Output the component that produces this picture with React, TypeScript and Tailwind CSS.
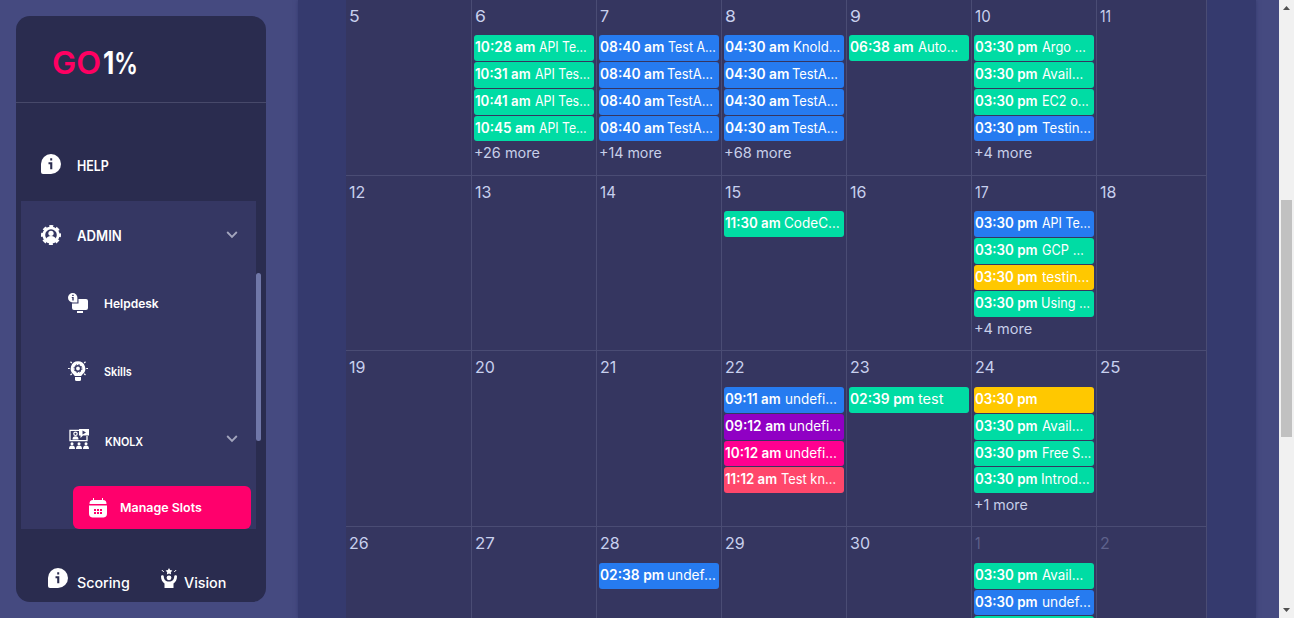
import { useLayoutEffect, useRef, type ReactNode } from "react";
import clsx from "clsx";

/** Condenses or widens a label so that it fills `width` pixels. */
function Fit({ text, width, className }: { text: string; width: number; className?: string }) {
  const ref = useRef<HTMLSpanElement>(null);
  useLayoutEffect(() => {
    const el = ref.current;
    if (!el || !text) return;
    const apply = () => {
      if (el.offsetWidth > 0) el.style.transform = `scaleX(${width / el.offsetWidth})`;
    };
    apply();
    document.fonts.ready.then(apply);
  }, [text, width]);
  return (
    <span className={clsx("block shrink-0 whitespace-pre", className)} style={{ width }}>
      <span ref={ref} className="inline-block origin-left">
        {text}
      </span>
    </span>
  );
}

function InfoIcon() {
  return (
    <svg width="20" height="20" viewBox="0 0 20 20" className="shrink-0">
      <path d="M10 0a10 10 0 1 1 0 20H2a2 2 0 0 1-2-2v-8A10 10 0 0 1 10 0Z" fill="#fff" />
      <path d="M9.2 4.3h2v2.2h-2zM7.5 8.3h3.8v7H9.2v-5H7.5z" fill="#2a2c4f" />
    </svg>
  );
}

function AdminIcon() {
  return (
    <svg width="20" height="20" viewBox="0 0 20 20" className="shrink-0">
      <circle cx="10" cy="10" r="7.2" fill="none" stroke="#fff" strokeWidth="2.8" />
      <circle cx="10" cy="10" r="9" fill="none" stroke="#fff" strokeWidth="2" strokeDasharray="4 3.07" strokeDashoffset="2" />
      <circle cx="10" cy="8.3" r="2.6" fill="#fff" />
      <path d="M4.8 15c.6-3 2.5-4 5.2-4s4.600 1 5.200 4L10 18z" fill="#fff" />
    </svg>
  );
}

function HelpdeskIcon() {
  return (
    <svg width="20" height="20" viewBox="0 0 20 20" className="shrink-0">
      <path d="M10.500 6H18a2 2 0 0 1 2 2v7a2 2 0 0 1-2 2H6a2 2 0 0 1-2-2v-4.500h6.500z" fill="#fff" />
      <path d="M9 18h6v2H9z" fill="#fff" />
      <path d="M4.700 0a4.700 4.700 0 0 1 4.700 4.700v4.700H4.700A4.700 4.700 0 0 1 4.700 0Z" fill="#fff" />
      <path d="M4.200 1.700h1.500v1.300H4.200zM3.800 3.900h1.900v3.600H4.300V4.900h-.5z" fill="#353763" />
    </svg>
  );
}

function SkillsIcon() {
  return (
    <svg width="20" height="20" viewBox="0 0 20 20" className="shrink-0">
      <path d="M10 .3a7.300 7.300 0 0 1 4.400 13.100l-1.200 1.600H6.800l-1.200-1.600A7.300 7.300 0 0 1 10 .3Z" fill="#fff" />
      <path d="M7 16h6v2.500a1.500 1.500 0 0 1-1.500 1.500h-3A1.500 1.500 0 0 1 7 18.500z" fill="#fff" />
      <path d="M0 7.500h1.800M18.200 7.500H20M2.500.8l1.300 1.200M17.500.8 16.200 2M2.500 14l1.300-1.200M17.500 14l-1.300-1.200" stroke="#fff" strokeWidth="1.200" />
      <circle cx="10" cy="7.500" r="2.700" fill="none" stroke="#353763" strokeWidth="1.600" />
      <circle cx="10" cy="7.500" r="3.900" fill="none" stroke="#353763" strokeWidth="1" strokeDasharray="1.500 1.560" />
    </svg>
  );
}

function KnolxIcon() {
  return (
    <svg width="20" height="20" viewBox="0 0 20 20" className="shrink-0">
      <path d="M10 1.300H1v10.400h17V7" fill="none" stroke="#fff" strokeWidth="1.300" />
      <path d="M10 0h10v6.500h-6L11.500 9V6.500H10z" fill="#fff" />
      <path d="m13.500 1.500 3.500 2-3.500 2z" fill="#353763" />
      <circle cx="6.500" cy="4.800" r="1.700" fill="none" stroke="#fff" strokeWidth="1.200" />
      <path d="M3.500 10.500c0-2.500 1-3.200 3-3.200s3 .7 3 3.200z" fill="#fff" />
      <g fill="#fff">
        <circle cx="3" cy="14.800" r="1.500" />
        <circle cx="10" cy="14.800" r="1.500" />
        <circle cx="17" cy="14.800" r="1.500" />
        <path d="M0 20c0-2.500 1-3.500 3-3.500S6 17.500 6 20zM7 20c0-2.500 1-3.500 3-3.500s3 1 3 3.500zM14 20c0-2.500 1-3.500 3-3.500s3 1 3 3.500z" />
      </g>
    </svg>
  );
}

function CalendarIcon() {
  return (
    <svg width="18" height="20" viewBox="0 0 18 20" className="shrink-0">
      <path d="M4 0h1v2h8V0h1v2c2.500 0 3.500 1.500 3.500 4H.5C.5 3.500 1.500 2 4 2z" fill="#fff" />
      <path d="M0 7.500h18V15c0 3.500-1.500 4.500-4.500 4.500h-9C1.500 19.500 0 18.500 0 15z" fill="#fff" />
      <path d="M5 11h2v2H5zM8 11h2v2H8zM11 11h2v2h-2zM5 14h2v2H5zM8 14h2v2H8zM11 14h2v2h-2z" fill="#ff006c" />
    </svg>
  );
}

function VisionIcon() {
  return (
    <svg width="16" height="20" viewBox="0 0 16 20" className="shrink-0">
      <path d="m8 0 1.100 2.100 2.300.4-1.600 1.700.3 2.300L8 5.500l-2.100 1 .3-2.300-1.600-1.700 2.300-.4z" fill="#fff" />
      <path d="m.8 2 2 2M15.200 2l-2 2" stroke="#fff" strokeWidth="1" />
      <circle cx="8" cy="9.800" r="2.400" fill="#fff" />
      <path d="M0 8.500c0-1.600 2.800-1.600 2.800 0 0 3 2 5 5.200 5s5.200-2 5.200-5c0-1.600 2.800-1.600 2.800 0 0 3.500-1.500 5.500-3.500 7V20h-9v-4.500C1.500 14 0 12 0 8.500Z" fill="#fff" />
    </svg>
  );
}

function Chevron() {
  return (
    <svg width="12" height="8" viewBox="0 0 12 8" className="ml-auto shrink-0">
      <path d="m1.200 1 4.800 4.900L10.800 1" fill="none" stroke="#a3a5bd" strokeWidth="1.800" />
    </svg>
  );
}

function NavItem({ icon, label, width, className, textClass, chevron }: {
  icon: ReactNode;
  label: string;
  width: number;
  className: string;
  textClass: string;
  chevron?: boolean;
}) {
  return (
    <div className={clsx("flex items-center text-white", className)}>
      {icon}
      <Fit text={label} width={width} className={textClass} />
      {chevron && <Chevron />}
    </div>
  );
}

function Sidebar() {
  return (
    <aside className="flex h-[586px] w-[250px] shrink-0 flex-col overflow-hidden rounded-[14px] bg-[#2a2c4f]">
      <div className="flex h-[87px] shrink-0 items-center border-b border-[#47496a] pt-[7px] pl-9 text-[31px] leading-none">
        <Fit text="GO" width={49} className="font-semibold text-[#ff0062]" />
        <Fit text="1" width={11} className="ml-[2px] font-bold text-white" />
        <Fit text="%" width={24} className="text-[30px] font-semibold text-white" />
      </div>
      <NavItem icon={<InfoIcon />} label="HELP" width={32} className="h-[98px] pt-[24px] pl-[25px]" textClass="ml-4 pt-[3px] text-sm font-semibold" />
      <div className="flex h-[328px] shrink-0 pl-[5px]">
        <div className="h-full w-[235px] overflow-hidden bg-[#353763]">
          <NavItem icon={<AdminIcon />} label="ADMIN" width={45} className="h-[68px] pr-[18px] pl-5" textClass="ml-4 pt-[2px] text-sm font-semibold" chevron />
          <NavItem icon={<HelpdeskIcon />} label="Helpdesk" width={55} className="h-[68px] pl-[47px]" textClass="ml-4 pt-[2px] text-xs font-semibold" />
          <NavItem icon={<SkillsIcon />} label="Skills" width={28} className="h-[68px] pl-[47px]" textClass="ml-4 pt-[1px] text-xs font-semibold" />
          <NavItem icon={<KnolxIcon />} label="KNOLX" width={38} className="h-[68px] pr-[18px] pl-12" textClass="ml-4 pt-[6px] text-xs font-semibold" chevron />
          <NavItem icon={<CalendarIcon />} label="Manage Slots" width={82} className="mt-[13px] ml-[52px] h-[43px] w-[178px] rounded-md bg-[#ff006c] pl-4" textClass="ml-[13px] text-xs font-semibold" />
        </div>
        <div className="mt-[72px] h-[168px] w-[5px] rounded-full bg-[#7077a8]" />
      </div>
      <div className="flex h-[73px] items-center pt-[24px] pl-8 text-white">
        <InfoIcon />
        <Fit text="Scoring" width={53} className="ml-[9px] pt-[10px] text-sm font-medium" />
        <div className="ml-[31px]">
          <VisionIcon />
        </div>
        <Fit text="Vision" width={42} className="ml-[7px] pt-[10px] text-sm font-medium" />
      </div>
    </aside>
  );
}

const COLORS = {
  green: "bg-[#00dca4]",
  blue: "bg-[#267bf0]",
  yellow: "bg-[#ffc800]",
  purple: "bg-[#9000c4]",
  pink: "bg-[#ff0090]",
  coral: "bg-[#ff476b]",
};

type Slot = {
  color: keyof typeof COLORS;
  time?: string;
  timeWidth?: number;
  title?: string;
  gap?: number;
  titleWidth?: number;
};
type Day = { day: number; muted?: boolean; slots?: Slot[]; more?: string; moreWidth?: number };

const slot = (color: Slot["color"], time?: string, timeWidth?: number, title?: string, gap?: number, titleWidth?: number): Slot => ({
  color, time, timeWidth, title, gap, titleWidth,
});

const WEEKS: { height: string; offset: string; days: Day[] }[] = [
  {
    height: "h-[175px]",
    offset: "h-[35.2px] pt-[4px]",
    days: [
      { day: 5 },
      { day: 6, more: "+26 more", moreWidth: 66, slots: [
        slot("green", "10:28 am", 60, "API Te…", 4, 48),
        slot("green", "10:31 am", 56, "API Tes…", 4, 55),
        slot("green", "10:41 am", 56, "API Tes…", 4, 55),
        slot("green", "10:45 am", 60, "API Te…", 4, 48),
      ] },
      { day: 7, more: "+14 more", moreWidth: 63, slots: [
        slot("blue", "08:40 am", 64, "Test A…", 4, 48),
        slot("blue", "08:40 am", 64, "TestA…", 3, 46),
        slot("blue", "08:40 am", 64, "TestA…", 3, 46),
        slot("blue", "08:40 am", 64, "TestA…", 3, 46),
      ] },
      { day: 8, more: "+68 more", moreWidth: 67, slots: [
        slot("blue", "04:30 am", 64, "Knold…", 4, 47),
        slot("blue", "04:30 am", 64, "TestA…", 3, 46),
        slot("blue", "04:30 am", 64, "TestA…", 3, 46),
        slot("blue", "04:30 am", 64, "TestA…", 3, 46),
      ] },
      { day: 9, slots: [slot("green", "06:38 am", 64, "Auto…", 4, 40)] },
      { day: 10, more: "+4 more", moreWidth: 58, slots: [
        slot("green", "03:30 pm", 63, "Argo …", 4, 44),
        slot("green", "03:30 pm", 63, "Avail…", 4, 41),
        slot("green", "03:30 pm", 63, "EC2 o…", 4, 47),
        slot("blue", "03:30 pm", 63, "Testin…", 4, 49),
      ] },
      { day: 11 },
    ],
  },
  {
    height: "h-[175px]",
    offset: "h-[35.07px] pt-[4px]",
    days: [
      { day: 12 },
      { day: 13 },
      { day: 14 },
      { day: 15, slots: [slot("green", "11:30 am", 56, "CodeC…", 3, 56)] },
      { day: 16 },
      { day: 17, more: "+4 more", moreWidth: 58, slots: [
        slot("blue", "03:30 pm", 63, "API Te…", 4, 49),
        slot("green", "03:30 pm", 63, "GCP …", 4, 42),
        slot("yellow", "03:30 pm", 63, "testin…", 4, 47),
        slot("green", "03:30 pm", 63, "Using …", 3, 49),
      ] },
      { day: 18 },
    ],
  },
  {
    height: "h-[176px]",
    offset: "h-[35.93px] pt-[4px]",
    days: [
      { day: 19 },
      { day: 20 },
      { day: 21 },
      { day: 22, slots: [
        slot("blue", "09:11 am", 56, "undefi…", 4, 52),
        slot("purple", "09:12 am", 60, "undefi…", 4, 52),
        slot("pink", "10:12 am", 56, "undefi…", 4, 52),
        slot("coral", "11:12 am", 52, "Test kn…", 4, 55),
      ] },
      { day: 23, slots: [slot("green", "02:39 pm", 64, "test", 4, 26)] },
      { day: 24, more: "+1 more", moreWidth: 54, slots: [
        slot("yellow", "03:30 pm", 63),
        slot("green", "03:30 pm", 63, "Avail…", 4, 41),
        slot("green", "03:30 pm", 63, "Free S…", 4, 49),
        slot("green", "03:30 pm", 63, "Introd…", 3, 49),
      ] },
      { day: 25 },
    ],
  },
  {
    height: "h-[176px]",
    offset: "h-[35.8px] pt-[4px]",
    days: [
      { day: 26 },
      { day: 27 },
      { day: 28, slots: [slot("blue", "02:38 pm", 64, "undef…", 3, 49)] },
      { day: 29 },
      { day: 30 },
      { day: 1, muted: true, slots: [
        slot("green", "03:30 pm", 63, "Avail…", 4, 41),
        slot("blue", "03:30 pm", 63, "undef…", 4, 49),
        slot("green"),
      ] },
      { day: 2, muted: true },
    ],
  },
];

const DAY_WIDTHS: Record<number, number> = { 1: 6, 2: 10, 7: 9, 10: 16, 11: 11, 12: 16, 13: 16, 14: 16, 15: 16, 16: 16, 17: 14, 18: 16, 19: 16, 21: 16 };

function DayCell({ data, offset }: { data: Day; offset: string }) {
  return (
    <div className="min-w-0 border-r border-[#4a4c74] pl-[2px]">
      <div className={clsx("pl-[1px] text-base leading-6", offset, data.muted ? "text-[#5f628c]" : "text-[#c8d0ee]")}>
        <Fit text={String(data.day)} width={DAY_WIDTHS[data.day] ?? (data.day > 9 ? 20 : 11)} />
      </div>
      {data.slots?.map((s, i) => (
        <div key={i} className={clsx("mb-px flex h-[25.8px] w-[120px] overflow-hidden rounded-[3px] pl-[1px] text-sm leading-[24px] text-white", COLORS[s.color])}>
          {s.time && <Fit text={s.time} width={s.timeWidth ?? 0} className="font-semibold" />}
          {s.title && (
            <div className="flex">
              <span className="shrink-0" style={{ width: s.gap }} />
              <Fit text={s.title} width={s.titleWidth ?? 0} />
            </div>
          )}
        </div>
      ))}
      {data.more && <Fit text={data.more} width={data.moreWidth ?? 60} className="text-sm leading-[21px] text-[#c8cfe9]" />}
    </div>
  );
}

function Calendar() {
  return (
    <div className="h-full w-[861px] overflow-hidden bg-[#353660]">
      {WEEKS.map((week, i) => (
        <div key={i} className={clsx("grid grid-cols-[126px_125px_125px_125px_125px_125px_110px]", week.height, i > 0 && "border-t border-[#4a4c74]")}>
          {week.days.map((d) => (
            <DayCell key={d.day} data={d} offset={week.offset} />
          ))}
        </div>
      ))}
    </div>
  );
}

function Scrollbar() {
  return (
    <div className="flex h-full w-[15px] shrink-0 flex-col items-center bg-[#f1f1f1]">
      <svg width="15" height="15" viewBox="0 0 15 15" className="shrink-0">
        <path d="m4 10 3.500-4 3.500 4z" fill="#505050" />
      </svg>
      <div className="mt-[185px] h-[237px] w-[11px] bg-[#c1c1c1]" />
      <svg width="15" height="15" viewBox="0 0 15 15" className="mt-auto shrink-0">
        <path d="m4 5 3.500 4L11 5z" fill="#505050" />
      </svg>
    </div>
  );
}

export default function App() {
  return (
    <div className="flex h-[618px] w-[1294px] overflow-hidden bg-[#454a80] font-['Inter',sans-serif]">
      <div className="w-[298px] shrink-0 pt-4 pl-4">
        <Sidebar />
      </div>
      <main className="h-full w-[958px] shrink-0 bg-[#353a6e] pl-12 shadow-[0_0_4px_#353a6e]">
        <Calendar />
      </main>
      <div className="ml-auto">
        <Scrollbar />
      </div>
    </div>
  );
}
